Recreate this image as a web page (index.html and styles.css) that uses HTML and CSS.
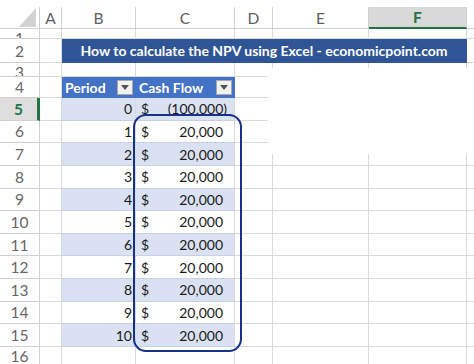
FILE: index.html
```html
<!DOCTYPE html>
<html>
<head>
<meta charset="utf-8">
<title>NPV in Excel</title>
<link rel="stylesheet" href="styles.css">
</head>
<body>
<div class="sheet">
  <div class="row hdr">
    <div class="cell rh corner"><svg width="18" height="19" viewBox="0 0 18 19"><polygon points="17,0 17,19 0,19" fill="#d2d2d2"/></svg></div>
    <div class="cell a">A</div>
    <div class="cell b">B</div>
    <div class="cell c">C</div>
    <div class="cell d">D</div>
    <div class="cell e">E</div>
    <div class="cell f sel">F</div>
    <div class="cell g"></div>
  </div>
  <div class="row r1">
    <div class="cell rh">1</div><div class="cell a"></div><div class="cell b"></div><div class="cell c"></div><div class="cell d"></div><div class="cell e"></div><div class="cell f"></div><div class="cell g"></div>
  </div>
  <div class="row r2">
    <div class="cell rh">2</div><div class="cell a"></div><div class="cell title">How to calculate the NPV using Excel - economicpoint.com</div><div class="cell g"></div>
  </div>
  <div class="row r3">
    <div class="cell rh">3</div><div class="cell a"></div><div class="cell b"></div><div class="cell c"></div><div class="cell d"></div><div class="cell e"></div><div class="cell f"></div><div class="cell g"></div>
  </div>
  <div class="row r4">
    <div class="cell rh">4</div><div class="cell a"></div>
    <div class="cell b th"><span>Period</span><span class="dd"><svg width="8" height="5" viewBox="0 0 8 5"><polygon points="0,0 8,0 4,5" fill="#555"/></svg></span></div>
    <div class="cell c th"><span>Cash Flow</span><span class="dd"><svg width="8" height="5" viewBox="0 0 8 5"><polygon points="0,0 8,0 4,5" fill="#555"/></svg></span></div>
    <div class="cell d"></div><div class="cell e"></div><div class="cell f"></div><div class="cell g"></div>
  </div>
  <div class="row rd">
    <div class="cell rh act">5</div><div class="cell a"></div>
    <div class="cell b td band">0</div>
    <div class="cell c tc band neg"><span>$</span><span>(100,000)</span></div>
    <div class="cell d"></div><div class="cell e"></div><div class="cell f"></div><div class="cell g"></div>
  </div>
  <div class="row rd">
    <div class="cell rh">6</div><div class="cell a"></div>
    <div class="cell b td">1</div>
    <div class="cell c tc"><span>$</span><span>20,000</span></div>
    <div class="cell d"></div><div class="cell e"></div><div class="cell f"></div><div class="cell g"></div>
  </div>
  <div class="row rd">
    <div class="cell rh">7</div><div class="cell a"></div>
    <div class="cell b td band">2</div>
    <div class="cell c tc band"><span>$</span><span>20,000</span></div>
    <div class="cell d"></div><div class="cell e"></div><div class="cell f"></div><div class="cell g"></div>
  </div>
  <div class="row rd">
    <div class="cell rh">8</div><div class="cell a"></div>
    <div class="cell b td">3</div>
    <div class="cell c tc"><span>$</span><span>20,000</span></div>
    <div class="cell d"></div><div class="cell e"></div><div class="cell f"></div><div class="cell g"></div>
  </div>
  <div class="row rd">
    <div class="cell rh">9</div><div class="cell a"></div>
    <div class="cell b td band">4</div>
    <div class="cell c tc band"><span>$</span><span>20,000</span></div>
    <div class="cell d"></div><div class="cell e"></div><div class="cell f"></div><div class="cell g"></div>
  </div>
  <div class="row rd">
    <div class="cell rh">10</div><div class="cell a"></div>
    <div class="cell b td">5</div>
    <div class="cell c tc"><span>$</span><span>20,000</span></div>
    <div class="cell d"></div><div class="cell e"></div><div class="cell f"></div><div class="cell g"></div>
  </div>
  <div class="row rd">
    <div class="cell rh">11</div><div class="cell a"></div>
    <div class="cell b td band">6</div>
    <div class="cell c tc band"><span>$</span><span>20,000</span></div>
    <div class="cell d"></div><div class="cell e"></div><div class="cell f"></div><div class="cell g"></div>
  </div>
  <div class="row rd">
    <div class="cell rh">12</div><div class="cell a"></div>
    <div class="cell b td">7</div>
    <div class="cell c tc"><span>$</span><span>20,000</span></div>
    <div class="cell d"></div><div class="cell e"></div><div class="cell f"></div><div class="cell g"></div>
  </div>
  <div class="row rd">
    <div class="cell rh">13</div><div class="cell a"></div>
    <div class="cell b td band">8</div>
    <div class="cell c tc band"><span>$</span><span>20,000</span></div>
    <div class="cell d"></div><div class="cell e"></div><div class="cell f"></div><div class="cell g"></div>
  </div>
  <div class="row rd">
    <div class="cell rh">14</div><div class="cell a"></div>
    <div class="cell b td">9</div>
    <div class="cell c tc"><span>$</span><span>20,000</span></div>
    <div class="cell d"></div><div class="cell e"></div><div class="cell f"></div><div class="cell g"></div>
  </div>
  <div class="row rd">
    <div class="cell rh">15</div><div class="cell a"></div>
    <div class="cell b td band">10</div>
    <div class="cell c tc band"><span>$</span><span>20,000</span></div>
    <div class="cell d"></div><div class="cell e"></div><div class="cell f"></div><div class="cell g"></div>
  </div>
  <div class="row r16">
    <div class="cell rh">16</div><div class="cell a"></div><div class="cell b"></div><div class="cell c"></div><div class="cell d"></div><div class="cell e"></div><div class="cell f"></div><div class="cell g"></div>
  </div>

  <div class="mask"></div>
  <div class="ring"></div>
</div>
</body>
</html>
```

FILE: styles.css
```css
* { box-sizing: border-box; margin: 0; padding: 0; }
html, body { margin: 0; background: #ffffff; }
body {
  width: 474px;
  height: 364px;
  overflow: hidden;
  font-family: Lato, "Open Sans", sans-serif;
  color: #1a1a1a;
}
.sheet {
  position: relative;
  padding-top: 7px;
  height: 364px;
}
.row { display: flex; }
.cell {
  flex: none;
  border-right: 1px solid #dadada;
  border-bottom: 1px solid #dadada;
  overflow: hidden;
  white-space: nowrap;
  display: flex;
  align-items: center;
}
.rh { width: 40px; justify-content: center; font-size: 15.5px; color: #666666; border-color: #d0d0d0; }
.a { width: 22px; }
.b { width: 74px; }
.c { width: 99px; }
.d { width: 38px; }
.e { width: 96px; }
.f { width: 98px; }
.g { flex: 1; border-right: none; }

/* column header row */
.hdr { height: 22px; }
.hdr .cell { justify-content: center; font-size: 15.5px; color: #5e5e5e; border-color: #d0d0d0; }
.hdr .corner { align-items: flex-end; justify-content: flex-end; padding: 0 2px 1px 0; }
.hdr .sel {
  background: #d9d9d9;
  color: #217346;
  font-weight: 700;
  border-bottom: 2px solid #217346;
}

/* row heights */
.r1 { height: 10px; }
.r2 { height: 24px; }
.r3 { height: 14px; }
.r4 { height: 21px; }
.rd { height: 22.64px; }
.r16 { height: 20px; }
.r1 .rh, .r3 .rh { align-items: flex-start; line-height: 18px; }

.act {
  background: #dedede;
  color: #217346;
  font-weight: 700;
  border-right: 3px solid #217346;
}

/* title */
.title {
  width: 405px;
  background: #2f5597;
  border-color: #2f5597;
  color: #ffffff;
  font-weight: 700;
  font-size: 14px;
  justify-content: center;
}

/* table */
.th {
  background: #4472c4;
  border-color: #4472c4;
  color: #ffffff;
  font-weight: 700;
  font-size: 14px;
  justify-content: space-between;
  padding: 0 2px 0 3px;
}
.dd {
  width: 16px;
  height: 15px;
  background: #f2f2f2;
  border: 1px solid #a8a8a8;
  display: flex;
  align-items: center;
  justify-content: center;
}
.td, .tc { font-size: 14px; color: #1a1a1a; border-bottom-color: #c8d1e2; }
.td { justify-content: flex-end; padding-right: 3px; }
.tc { justify-content: space-between; padding: 0 11px 0 5px; }
.tc.neg { padding-right: 7px; }
.band { background: #d9e1f2; }

/* overlays */
.mask {
  position: absolute;
  left: 268px;
  top: 68px;
  width: 206px;
  height: 86px;
  background: #ffffff;
}
.ring {
  position: absolute;
  left: 133px;
  top: 114px;
  width: 109px;
  height: 238px;
  border: 2.5px solid #15328a;
  border-radius: 13px;
}
```
